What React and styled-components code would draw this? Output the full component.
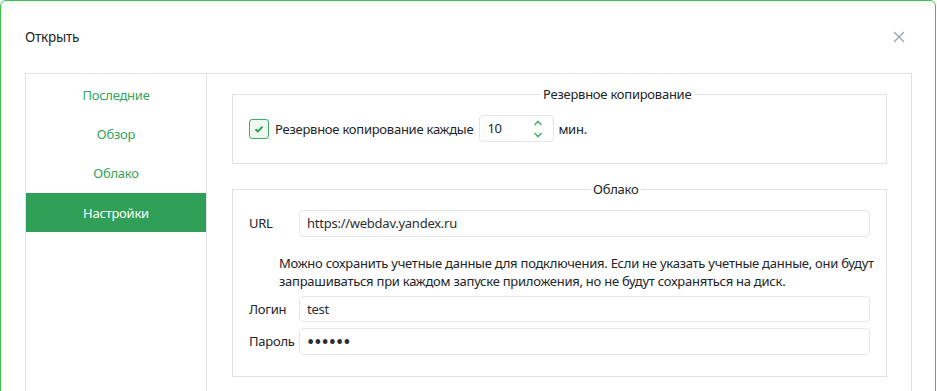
import React, { useState } from "react";
import styled, { createGlobalStyle } from "styled-components";

const GlobalStyle = createGlobalStyle`
  body {
    margin: 0;
    background: #ffffff;
    font-family: "Noto Sans", "Open Sans", sans-serif;
    font-size: 13px;
    letter-spacing: -0.25px;
    color: #212529;
  }
`;

const menu = ["Последние", "Обзор", "Облако", "Настройки"];

const App = () => {
  const [active, setActive] = useState("Настройки");
  const [backup, setBackup] = useState(true);

  return (
    <>
      <GlobalStyle />
      <Dialog>
        <Header>
          <Title>Открыть</Title>
          <CloseButton aria-label="close">
            <svg width="12" height="12" viewBox="0 0 12 12">
              <path d="M1 1L11 11M11 1L1 11" stroke="#9aa3ad" strokeWidth="1.3" />
            </svg>
          </CloseButton>
        </Header>
        <Body>
          <Panel>
            <Sidebar>
              {menu.map((item) => (
                <MenuItem
                  key={item}
                  $active={item === active}
                  onClick={() => setActive(item)}
                >
                  {item}
                </MenuItem>
              ))}
            </Sidebar>
            <Content>
              <Group>
                <Legend $offset={291}>Резервное копирование</Legend>
                <BackupRow>
                  <Checkbox $checked={backup} onClick={() => setBackup(!backup)}>
                    {backup && (
                      <svg width="10" height="8" viewBox="0 0 10 8">
                        <path
                          d="M1.5 4.2L3.9 6.4L8.5 1.6"
                          fill="none"
                          stroke="#2f9e55"
                          strokeWidth="2"
                        />
                      </svg>
                    )}
                  </Checkbox>
                  <span>Резервное копирование каждые</span>
                  <SpinBox>
                    <SpinValue>10</SpinValue>
                    <SpinArrows>
                      <svg width="10" height="20" viewBox="0 0 10 20">
                        <path
                          d="M1.5 6L5 2.5L8.5 6M1.5 14L5 17.5L8.5 14"
                          fill="none"
                          stroke="#46b46e"
                          strokeWidth="1.6"
                        />
                      </svg>
                    </SpinArrows>
                  </SpinBox>
                  <span>мин.</span>
                </BackupRow>
              </Group>
              <Group $bottom>
                <Legend $offset={341}>Облако</Legend>
                <FieldRow>
                  <Label>URL</Label>
                  <Input defaultValue="https://webdav.yandex.ru" />
                </FieldRow>
                <Help>
                  Можно сохранить учетные данные для подключения. Если не
                  указать учетные данные, они будут запрашиваться при каждом
                  запуске приложения, но не будут сохраняться на диск.
                </Help>
                <FieldRow>
                  <Label>Логин</Label>
                  <Input defaultValue="test" />
                </FieldRow>
                <FieldRow>
                  <Label>Пароль</Label>
                  <Input type="password" defaultValue="secret" $password />
                </FieldRow>
              </Group>
            </Content>
          </Panel>
        </Body>
      </Dialog>
    </>
  );
};

const Dialog = styled.div`
  width: 936px;
  height: 420px;
  box-sizing: border-box;
  border: 1px solid #3ec04f;
  border-radius: 6px;
  background: #fff;
`;

const Header = styled.div`
  height: 72px;
  display: flex;
  align-items: center;
  justify-content: space-between;
  padding: 0 28px 0 24px;
`;

const Title = styled.div`
  font-size: 13.5px;
`;

const CloseButton = styled.button`
  border: none;
  background: none;
  padding: 0;
  width: 16px;
  height: 16px;
  display: flex;
  align-items: center;
  justify-content: center;
  cursor: pointer;
`;

const Body = styled.div`
  padding: 0 23px 0 24px;
`;

const Panel = styled.div`
  display: flex;
  border: 1px solid #dee2e6;
  height: 340px;
`;

const Sidebar = styled.div`
  width: 180px;
  flex-shrink: 0;
  padding-top: 1px;
  border-right: 1px solid #dee2e6;
`;

const MenuItem = styled.div`
  height: 39.3px;
  display: flex;
  align-items: center;
  justify-content: center;
  cursor: pointer;
  color: ${(p) => (p.$active ? "#ffffff" : "#34a35c")};
  background: ${(p) => (p.$active ? "#30a058" : "transparent")};
`;

const Content = styled.div`
  flex: 1;
  padding: 10px 24px 0 25px;
`;

const Group = styled.fieldset`
  margin: 0 0 ${(p) => (p.$bottom ? "0" : "15px")};
  padding: 0 16px 21px;
  border: 1px solid #dee2e6;
  border-radius: 0;
  min-width: 0;
`;

const Legend = styled.legend`
  margin-left: ${(p) => p.$offset}px;
  padding: 0 3px;
  line-height: 20px;
`;

const BackupRow = styled.div`
  display: flex;
  align-items: center;
  gap: 6px;
  margin-top: 11px;
`;

const Checkbox = styled.div`
  width: 18px;
  height: 18px;
  border: 1px solid #3fae62;
  border-radius: 3px;
  background: #eef8f1;
  display: flex;
  align-items: center;
  justify-content: center;
  cursor: pointer;
`;

const SpinBox = styled.div`
  width: 75px;
  height: 27px;
  box-sizing: border-box;
  border: 1px solid #e3e6ea;
  border-radius: 4px;
  display: flex;
  align-items: center;
  justify-content: space-between;
  padding: 0 10px 0 7px;
  margin-right: -2px;
`;

const SpinValue = styled.span`
  margin-top: -2px;
`;

const SpinArrows = styled.span`
  display: flex;
`;

const FieldRow = styled.div`
  display: grid;
  grid-template-columns: 50px 1fr;
  align-items: center;
  margin-top: 6px;
  &:first-of-type {
    margin-top: 11px;
  }
`;

const Label = styled.label``;

const Input = styled.input`
  height: 26.5px;
  box-sizing: border-box;
  border: 1px solid #e3e6ea;
  border-radius: 4px;
  padding: 0 7px;
  font-family: ${(p) => (p.$password ? '"Lato", sans-serif' : '"Noto Sans", "Open Sans", sans-serif')};
  font-size: ${(p) => (p.$password ? "12.5px" : "13px")};
  letter-spacing: ${(p) => (p.$password ? "0" : "-0.25px")};
  color: #2b2f33;
  outline: none;
`;

const Help = styled.p`
  margin: 17px -12px 0 30px;
  line-height: 18px;
`;

export default App;
